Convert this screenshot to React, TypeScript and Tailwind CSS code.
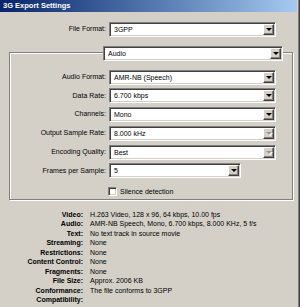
const font = { fontFamily: '"Liberation Sans", Arial, sans-serif' };

type ComboProps = { value: string; className: string; disabled?: boolean };

const Combo = ({ value, className, disabled }: ComboProps) => {
  return (
    <div
      className={`flex h-[15px] p-[1px] bg-white border border-t-[#808080] border-l-[#808080] border-r-white border-b-white shadow-[inset_1px_1px_0_#404040,inset_-1px_-1px_0_#d4d0c8] ${className}`}
    >
      <span className="flex-1 pl-[3px] text-[7px] leading-[11px] text-black whitespace-nowrap overflow-hidden">
        {value}
      </span>
      {/* drop button */}
      <div className="w-[11px] h-full flex items-center justify-center bg-[#d4d0c8] border border-t-white border-l-white border-r-[#404040] border-b-[#404040] shadow-[inset_-1px_-1px_0_#808080]">
        {disabled ? (
          <div className="w-0 h-0 border-l-[3px] border-r-[3px] border-t-[3px] border-l-transparent border-r-transparent border-t-[#9a968e] drop-shadow-[1px_1px_0_#fff]" />
        ) : (
          <div className="w-0 h-0 border-l-[3px] border-r-[3px] border-t-[3px] border-l-transparent border-r-transparent border-t-black" />
        )}
      </div>
    </div>
  );
};

const rows = [
  { label: "Audio Format:", value: "AMR-NB (Speech)" },
  { label: "Data Rate:", value: "6.700 kbps" },
  { label: "Channels:", value: "Mono" },
  { label: "Output Sample Rate:", value: "8.000 kHz", disabled: true },
  { label: "Encoding Quality:", value: "Best", disabled: true },
];

const info = [
  ["Video:", "H.263 Video, 128 x 96, 64 kbps, 10.00 fps"],
  ["Audio:", "AMR-NB Speech, Mono, 6.700 kbps, 8.000 KHz, 5 f/s"],
  ["Text:", "No text track in source movie"],
  ["Streaming:", "None"],
  ["Restrictions:", "None"],
  ["Content Control:", "None"],
  ["Fragments:", "None"],
  ["File Size:", "Approx. 2006 KB"],
  ["Conformance:", "The file conforms to 3GPP"],
  ["Compatibility:", ""],
];

const App = () => {
  return (
    <div
      className="w-[300px] h-[307px] overflow-hidden bg-[#d4d0c8] flex"
      style={font}
    >
      <div className="w-[298px] h-full flex flex-col">
        {/* title bar */}
        <div className="h-[12px] w-[297px] shrink-0 bg-gradient-to-r from-[#0a246a] to-[#a6caf0] pl-[3px] flex items-center">
          <span className="text-white font-bold text-[7.5px] leading-[12px] whitespace-nowrap">
            3G Export Settings
          </span>
        </div>

        {/* file format */}
        <div className="flex items-center mt-[10px]">
          <span className="w-[106px] text-right text-[7px] text-black whitespace-nowrap">
            File Format:
          </span>
          <Combo value="3GPP" className="ml-[3px] w-[167px]" />
        </div>

        {/* audio group box */}
        <div className="ml-[9px] w-[284px] mt-[15px] border border-[#808080] shadow-[inset_1px_1px_0_#fff,1px_1px_0_#fff] pb-[3px]">
          <Combo value="Audio" className="-mt-[7px] ml-[93px] w-[180px]" />

          <div className="flex flex-col gap-[3.8px] mt-[8.5px]">
            {rows.map((r, i) => (
              <div key={i} className="flex items-center">
                <span className="w-[96px] text-right text-[7px] text-black whitespace-nowrap">
                  {r.label}
                </span>
                <Combo value={r.value} disabled={r.disabled} className="ml-[3px] w-[167px]" />
              </div>
            ))}
            <div className="flex items-center">
              <span className="w-[96px] text-right text-[7px] text-black whitespace-nowrap">
                Frames per Sample:
              </span>
              <Combo value="5" className="ml-[3px] w-[132px]" />
            </div>
          </div>

          <div className="flex items-center mt-[8.5px] ml-[98px]">
            <div className="w-[9px] h-[9px] bg-white border border-t-[#808080] border-l-[#808080] border-r-white border-b-white shadow-[inset_1px_1px_0_#404040,inset_-1px_-1px_0_#d4d0c8]" />
            <span className="ml-[3px] text-[7px] leading-[9px] text-black">Silence detection</span>
          </div>
        </div>

        {/* summary */}
        <div className="grid grid-cols-[83px_1fr] gap-x-[7px] mt-[10px] text-[7px] leading-[9.45px] text-black">
          {info.map(([k, v], i) => (
            <div key={i} className="contents">
              <span className="text-right font-bold whitespace-nowrap">{k}</span>
              <span className="whitespace-nowrap">{v}</span>
            </div>
          ))}
        </div>
      </div>
      <div className="w-[2px] h-full border-l border-[#808080] bg-[#404040]" />
    </div>
  );
};

export default App;
